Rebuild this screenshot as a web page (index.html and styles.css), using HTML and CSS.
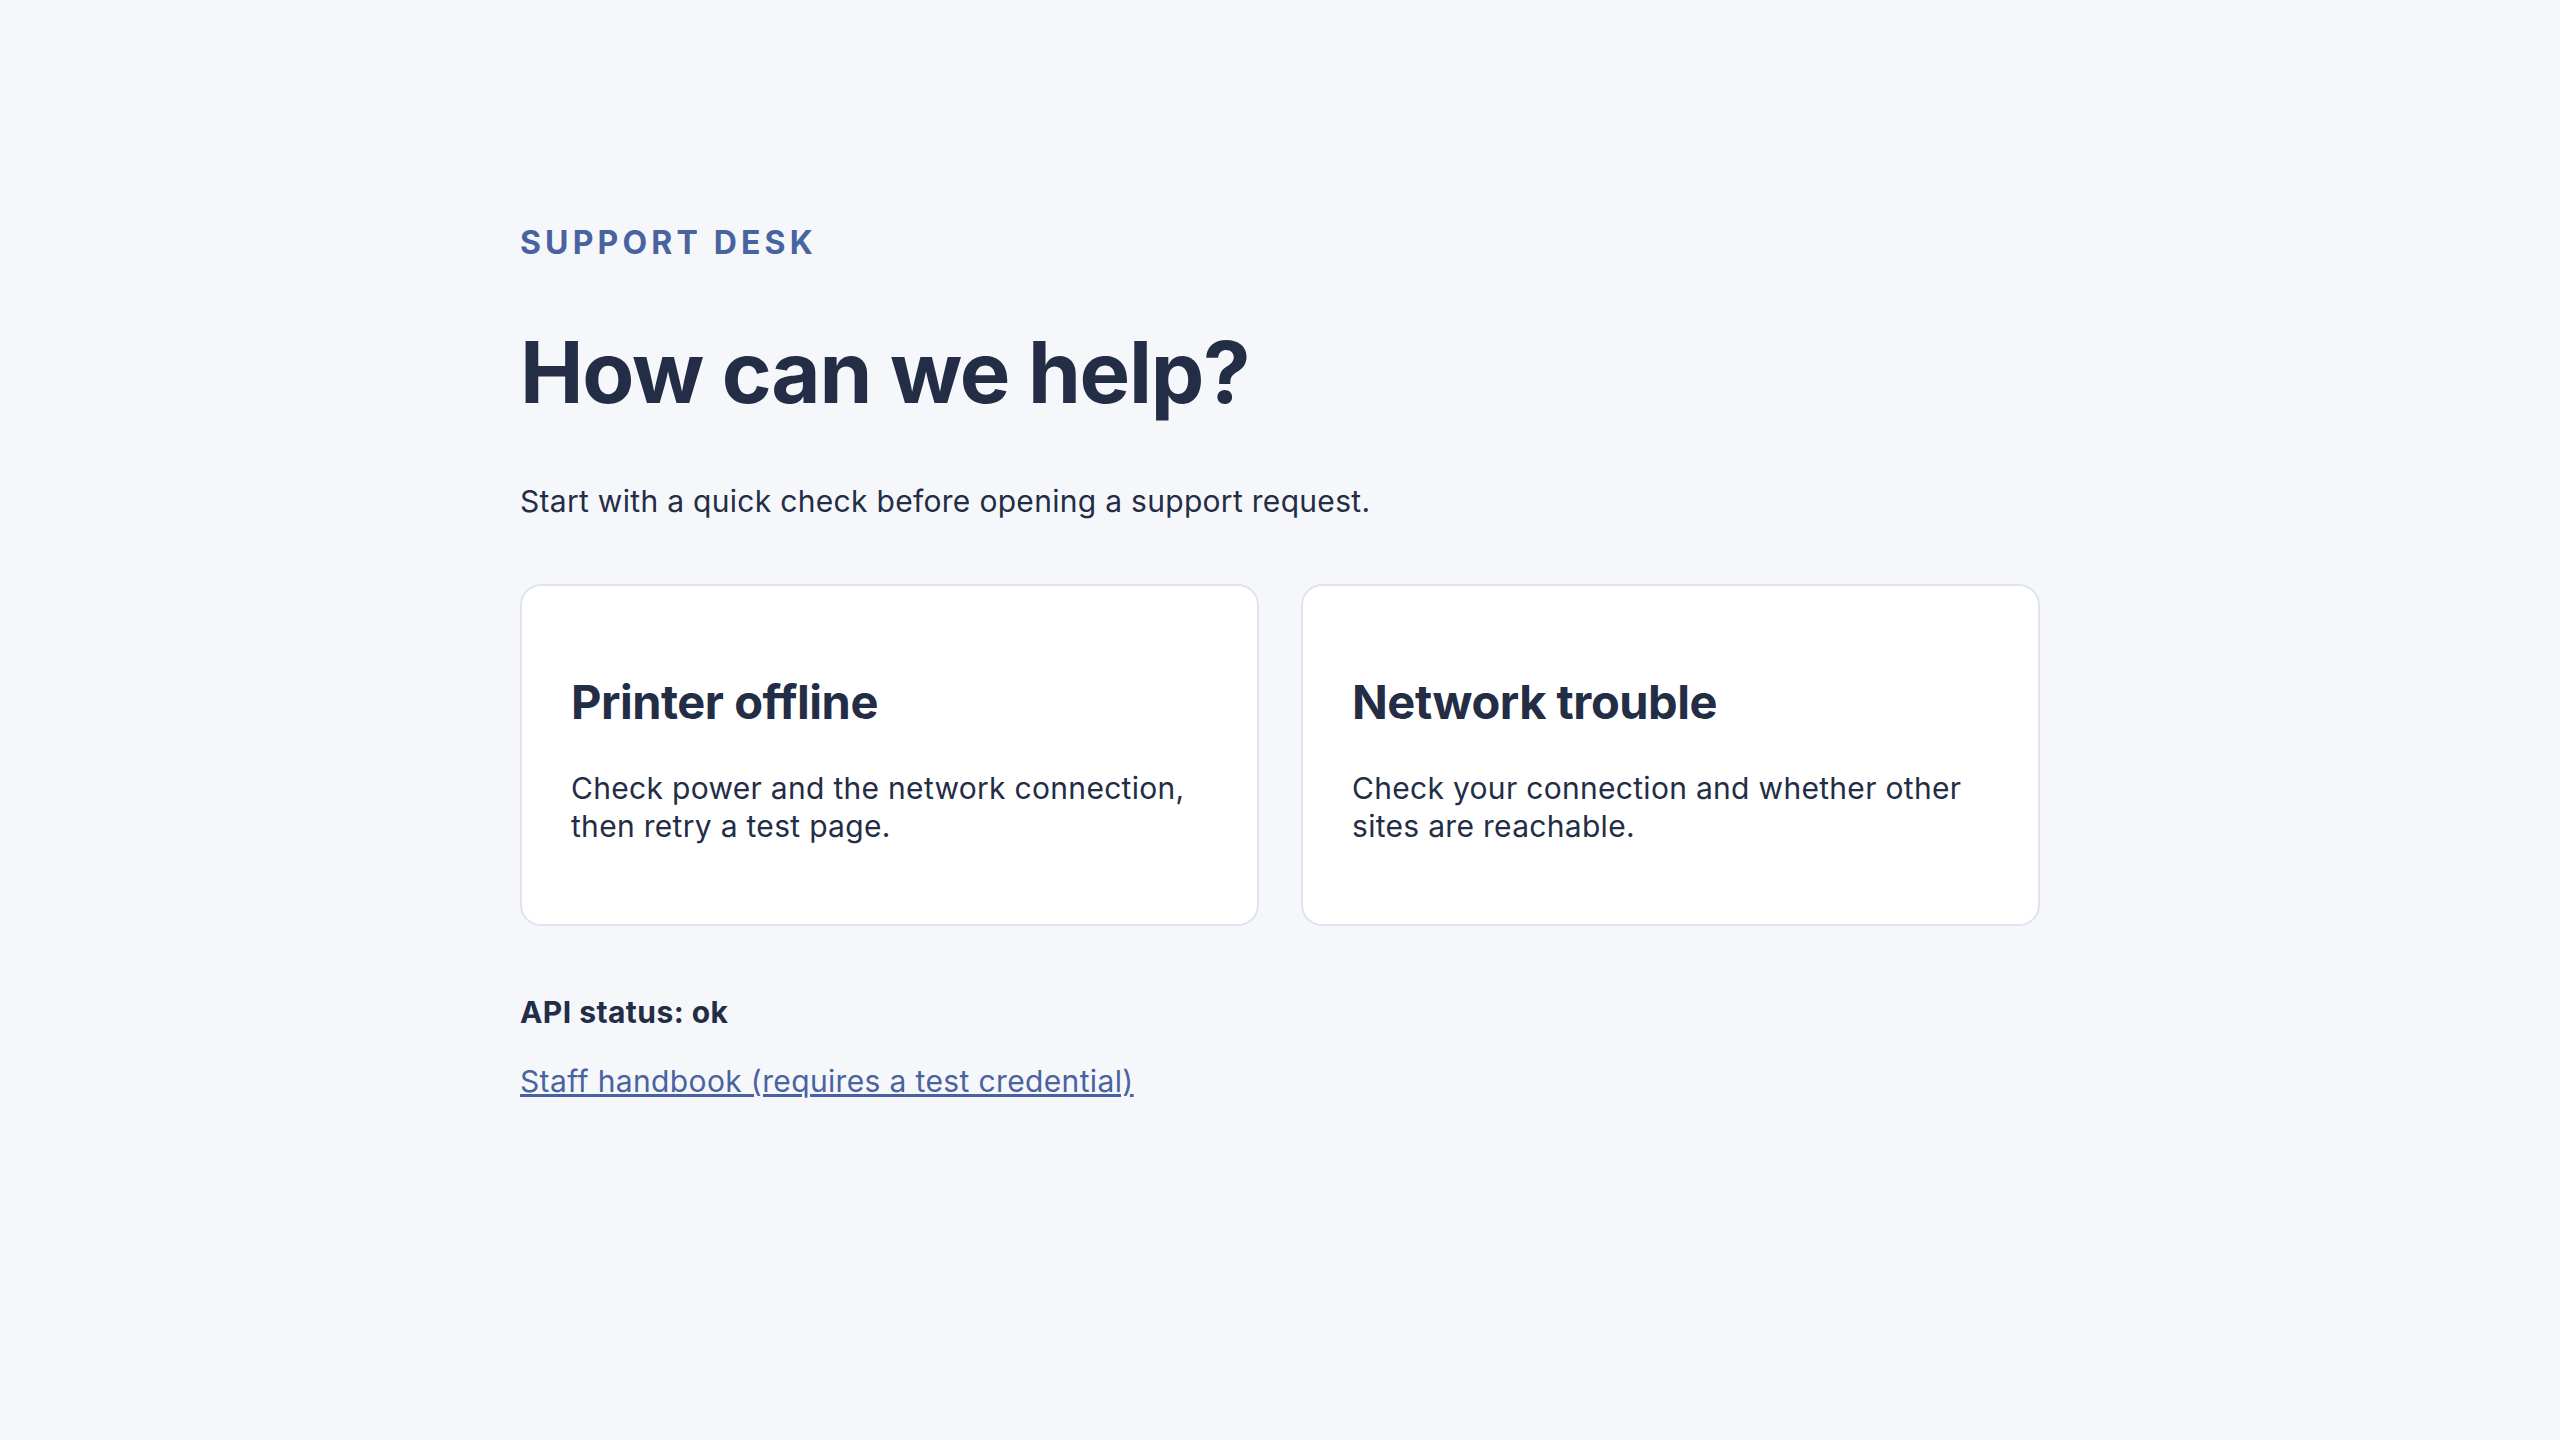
FILE: index.html
```html
<!DOCTYPE html>
<html lang="en">

<head>
    <meta charset="UTF-8">
    <meta name="viewport" content="width=device-width, initial-scale=1.0">
    <title>Support Desk</title>
    <link rel="stylesheet" href="styles.css">
</head>

<body>

    <main class="page">
        <p class="eyebrow">Support desk</p>
        <h1 class="title">How can we help?</h1>
        <p class="lead">Start with a quick check before opening a support request.</p>

        <section class="cards">
            <article class="card">
                <h2 class="card-title">Printer offline</h2>
                <p class="card-text">Check power and the network connection, then retry a test page.</p>
            </article>
            <article class="card">
                <h2 class="card-title">Network trouble</h2>
                <p class="card-text">Check your connection and whether other sites are reachable.</p>
            </article>
        </section>

        <p class="status">API status: ok</p>
        <a class="handbook" href="#">Staff handbook (requires a test credential)</a>
    </main>

</body>

</html>
```

FILE: styles.css
```css
body {
    margin: 0;
    background-color: #f6f7fb;
    color: #232d45;
    font-family: Inter, "Noto Sans", sans-serif;
}

.page {
    max-width: 1520px;
    margin: 0 auto;
    padding-top: 224px;
}

.eyebrow {
    margin: 0;
    font-size: 32px;
    line-height: 1.2;
    font-weight: 700;
    letter-spacing: 0.13em;
    text-transform: uppercase;
    color: #48639f;
}

.title {
    margin: 64px 0 0;
    font-size: 85px;
    line-height: 1.1;
    font-weight: 700;
    letter-spacing: -0.015em;
}

.lead {
    margin: 59px 0 0;
    font-size: 30px;
    line-height: 44px;
    letter-spacing: 0.01em;
}

.cards {
    display: grid;
    grid-template-columns: 1fr 1fr;
    gap: 42px;
    margin-top: 61px;
}

.card {
    background-color: #fff;
    border: 2px solid #dfe3ec;
    border-radius: 21px;
    padding: 88px 49px 79px;
}

.card-title {
    margin: 0;
    font-size: 47px;
    line-height: 1.2;
    font-weight: 700;
    letter-spacing: -0.01em;
}

.card-text {
    margin: 39px 0 0;
    font-size: 30px;
    line-height: 38px;
    letter-spacing: 0.01em;
}

.status {
    margin: 64px 0 0;
    font-size: 30px;
    line-height: 44px;
    font-weight: 700;
    letter-spacing: 0.015em;
}

.handbook {
    display: inline-block;
    margin-top: 25px;
    font-size: 30px;
    line-height: 44px;
    letter-spacing: 0.012em;
    color: #48639f;
}
```
